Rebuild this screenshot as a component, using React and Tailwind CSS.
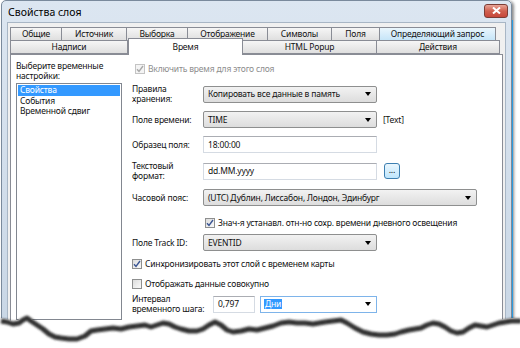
import React from "react";

const row1 = [
  ["Общие", "w-[52px]"],
  ["Источник", "w-[66px]"],
  ["Выборка", "w-[62px]"],
  ["Отображение", "w-[81px]"],
  ["Символы", "w-[65px]"],
  ["Поля", "w-[49px]"],
  ["Определяющий запрос", "w-[117px]", true],
];

const row2 = [
  ["Надписи", "w-[118px]"],
  ["Время", "w-[115px]", false, true],
  ["HTML Popup", "w-[135px]"],
  ["Действия", "w-[124px]"],
];

const tear = [
  [0, 318], [6, 319], [12, 321], [18, 320], [22, 317], [26, 315], [30, 318], [36, 322],
  [42, 326], [48, 331], [54, 334], [60, 335], [68, 336], [76, 336], [84, 333], [90, 328],
  [96, 327], [104, 326], [112, 325], [120, 326], [128, 324], [136, 323], [144, 322], [150, 324],
  [156, 322], [162, 320], [168, 321], [174, 324], [180, 326], [188, 328], [196, 328], [202, 326],
  [208, 322], [214, 319], [220, 322], [226, 327], [232, 329], [240, 328], [248, 326], [256, 327],
  [264, 325], [272, 323], [280, 320], [288, 319], [296, 320], [304, 320], [312, 321], [318, 320],
  [324, 319], [332, 318], [340, 317], [346, 320], [354, 325], [362, 329], [370, 331], [378, 332],
  [386, 332], [394, 331], [400, 329], [408, 327], [414, 326], [420, 325], [426, 322], [432, 320],
  [438, 321], [444, 324], [450, 328], [456, 330], [462, 329], [468, 325], [474, 322], [480, 323],
  [486, 324], [492, 322], [498, 320], [504, 319], [510, 318], [520, 318],
];

const linePts = tear.map(([x, y]) => `${x},${y}`).join(" ");

function Tab({ label, w, hover, active }) {
  if (active) {
    return (
      <div
        className={`${w} h-[17px] -mt-[3px] -mb-[1px] z-10 bg-white border border-[#898c95] border-b-0 flex items-center justify-center`}
      >
        {label}
      </div>
    );
  }
  return (
    <div
      className={`${w} h-[14px] border border-[#898c95] -ml-[1px] first:ml-0 flex items-center justify-center ${
        hover
          ? "bg-gradient-to-b from-[#eaf6fd] to-[#c6e5f8] border-[#3c7fb1]"
          : "bg-gradient-to-b from-[#f6f6f6] to-[#dfdfdf]"
      }`}
    >
      {label}
    </div>
  );
}

function Combo({ w, children }) {
  return (
    <div
      className={`${w} h-[17px] rounded-[2px] border border-[#8e8f8f] bg-gradient-to-b from-[#f2f2f2] to-[#dddddd] flex items-center pl-[4px] pr-[5px] justify-between`}
    >
      <span>{children}</span>
      <span className="w-0 h-0 border-l-[3px] border-r-[3px] border-t-[4px] border-l-transparent border-r-transparent border-t-black" />
    </div>
  );
}

function TextBox({ w, children }) {
  return (
    <div className={`${w} h-[17px] border border-[#d5dbe3] border-t-[#abadb3] bg-white flex items-center pl-[4px]`}>
      {children}
    </div>
  );
}

function Check({ checked, disabled, children }) {
  return (
    <div className={`flex items-center gap-[3px] ${disabled ? "text-[#8d8d8d]" : ""}`}>
      <div
        className={`w-[10px] h-[10px] border ${
          disabled ? "border-[#c4c4c4] bg-[#f4f4f4]" : "border-[#8e8f8f] bg-gradient-to-br from-[#dcdcdc] to-[#fafafa]"
        } flex items-center justify-center`}
      >
        {checked && (
          <svg width="8" height="8" viewBox="0 0 8 8">
            <path d="M1 4.2 L3 6.5 L7 1" fill="none" stroke={disabled ? "#a8a8a8" : "#3a5593"} strokeWidth="1.4" />
          </svg>
        )}
      </div>
      <span>{children}</span>
    </div>
  );
}

export default function App() {
  return (
    <div className="relative w-[520px] h-[348px] bg-white overflow-hidden font-['Noto_Sans',sans-serif] text-[8.5px] tracking-[-0.18px] leading-[10px] text-[#111]">
      {/* WINDOW */}
      <div className="ml-[1px] w-[511px] h-[345px] border border-[#7a8a9c] rounded-t-[5px] bg-gradient-to-b from-[#dce6f1] to-[#c8d6e5] flex flex-col shadow-[2px_1px_3px_rgba(0,0,0,0.45)]">
        {/* TITLE */}
        <div className="h-[21px] flex items-center justify-between pl-[6px] pr-[3px] shrink-0">
          <span className="text-[10.5px] tracking-normal text-black">Свойства слоя</span>
          <div className="w-[24px] h-[14px] -mt-[2px] rounded-[3px] border border-[#7c3d35] bg-gradient-to-b from-[#e7a497] via-[#d0604f] to-[#c7473a] flex items-center justify-center">
            <svg width="9" height="7" viewBox="0 0 9 7">
              <path d="M1 0.5 L8 6.5 M8 0.5 L1 6.5" stroke="white" strokeWidth="2" />
            </svg>
          </div>
        </div>

        {/* CLIENT */}
        <div className="flex-1 mx-[5px] border border-[#a8b6c5] bg-[#f0f0f0] pt-[4px] px-[2px] flex flex-col">
          <div className="flex">
            {row1.map(([l, w, h]) => (
              <Tab key={l} label={l} w={w} hover={h} />
            ))}
          </div>
          <div className="flex items-end -mt-[1px]">
            {row2.map(([l, w, h, a]) => (
              <Tab key={l} label={l} w={w} hover={h} active={a} />
            ))}
          </div>

          {/* PANEL */}
          <div className="flex-1 bg-white border border-[#898c95] flex">
            <div className="w-[113px] pl-[5px] pt-[6px] flex flex-col shrink-0">
              <div className="leading-[10px]">
                Выберите временные
                <br />
                настройки:
              </div>
              <div className="mt-[2px] w-[106px] h-[237px] border border-[#828790] flex flex-col p-[1px] leading-[10.5px]">
                <div className="bg-[#3399ff] text-white pl-[2px]">Свойства</div>
                <div className="pl-[2px]">События</div>
                <div className="pl-[2px]">Временной сдвиг</div>
              </div>
            </div>

            <div className="flex-1 pl-[8px] pt-[9px] flex flex-col">
              <div className="pl-[3px]">
                <Check checked disabled>
                  Включить время для этого слоя
                </Check>
              </div>

              <div className="flex items-center mt-[10px]">
                <div className="w-[71px]">
                  Правила
                  <br />
                  хранения:
                </div>
                <Combo w="w-[174px]">Копировать все данные в память</Combo>
              </div>

              <div className="flex items-center mt-[7px]">
                <div className="w-[71px]">Поле времени:</div>
                <Combo w="w-[174px]">TIME</Combo>
                <span className="ml-[6px]">[Text]</span>
              </div>

              <div className="flex items-center mt-[8px]">
                <div className="w-[71px]">Образец поля:</div>
                <TextBox w="w-[174px]">18:00:00</TextBox>
              </div>

              <div className="flex items-center mt-[8px]">
                <div className="w-[71px]">
                  Текстовый
                  <br />
                  формат:
                </div>
                <TextBox w="w-[174px]">dd.MM.yyyy</TextBox>
                <div className="ml-[7px] w-[16px] h-[16px] rounded-[3px] border border-[#3c7fb1] bg-gradient-to-b from-[#eaf6fd] to-[#bee6fd] flex items-center justify-center text-[9px] leading-none pb-[3px]">
                  ...
                </div>
              </div>

              <div className="flex items-center mt-[8px]">
                <div className="w-[71px]">Часовой пояс:</div>
                <Combo w="w-[274px]">(UTC) Дублин, Лиссабон, Лондон, Эдинбург</Combo>
              </div>

              <div className="mt-[12px] ml-[73px]">
                <Check checked>Знач-я устанавл. отн-но сохр. времени дневного освещения</Check>
              </div>

              <div className="flex items-center mt-[6px]">
                <div className="w-[71px]">Поле Track ID:</div>
                <Combo w="w-[174px]">EVENTID</Combo>
              </div>

              <div className="mt-[8px]">
                <Check checked>Синхронизировать этот слой с временем карты</Check>
              </div>

              <div className="mt-[10px]">
                <Check>Отображать данные совокупно</Check>
              </div>

              <div className="flex items-center mt-[5px]">
                <div className="w-[81px]">
                  Интервал
                  <br />
                  временного шага:
                </div>
                <TextBox w="w-[42px]">0,797</TextBox>
                <div className="ml-[5px] w-[117px] h-[17px] border border-[#7eb4ea] bg-white flex items-center justify-between pl-[3px] pr-[5px]">
                  <span className="bg-[#3399ff] text-white px-[1px]">Дни</span>
                  <span className="w-0 h-0 border-l-[3px] border-r-[3px] border-t-[4px] border-l-transparent border-r-transparent border-t-black" />
                </div>
              </div>
            </div>
          </div>
        </div>
      </div>

      {/* blue edge line at right */}
      <div className="absolute left-[512px] top-[20px] w-[1px] h-[318px] bg-[#2b9be0]" />

      {/* TORN EDGE */}
      <svg className="absolute left-0 top-0" width="520" height="348" viewBox="0 0 520 348">
        <defs>
          <filter id="blur" x="-5%" y="-50%" width="110%" height="200%">
            <feGaussianBlur stdDeviation="1.3" />
          </filter>
        </defs>
        <polygon points={`${linePts} 520,348 0,348`} fill="white" />
        <polyline
          points={linePts}
          transform="translate(1,3)"
          fill="none"
          stroke="#333333"
          strokeWidth="5"
          strokeLinejoin="round"
          filter="url(#blur)"
        />
      </svg>
    </div>
  );
}
